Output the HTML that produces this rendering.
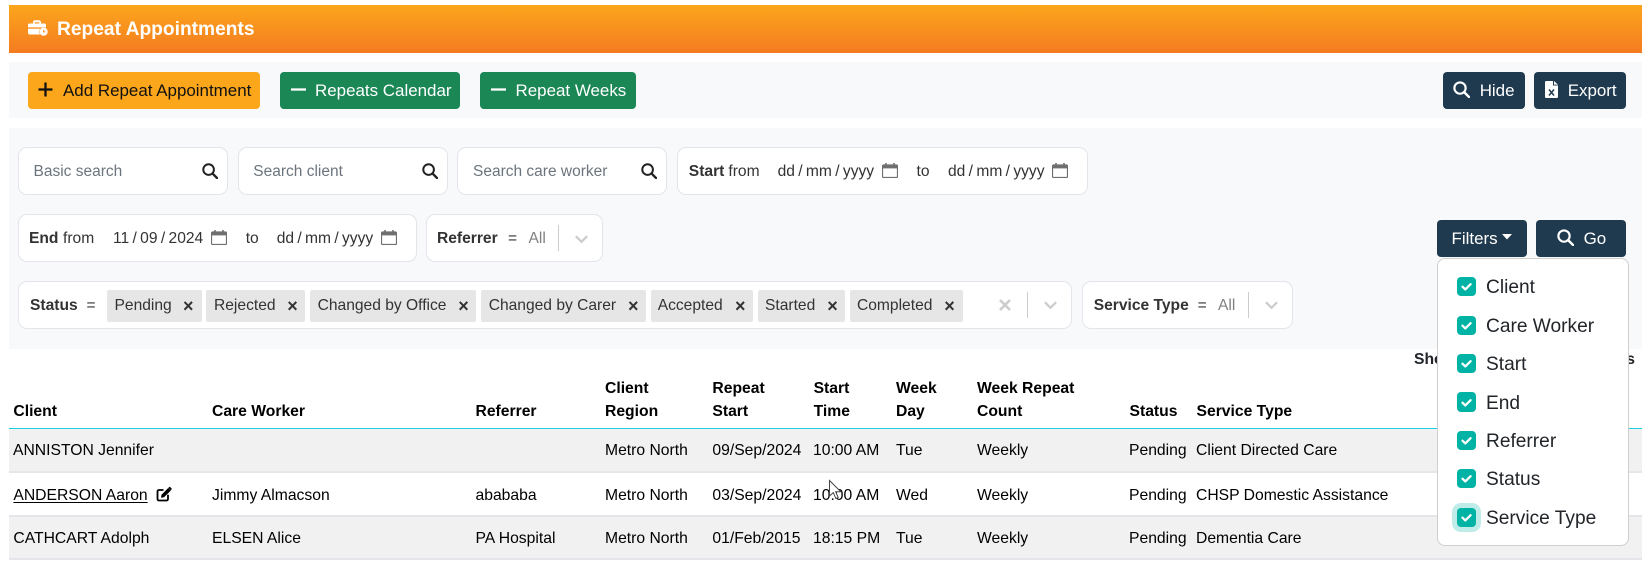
<!DOCTYPE html>
<html lang="en">
<head>
<meta charset="utf-8">
<title>Repeat Appointments</title>
<style>
html,body{margin:0;padding:0;background:#fff}
body{position:relative;width:1642px;height:570px;overflow:hidden;font-family:"Liberation Sans",Arial,sans-serif;color:#212529}
.a{position:absolute}
.t{position:absolute;white-space:nowrap;line-height:22px;height:22px}
.b{font-weight:bold}
.btn{position:absolute;border-radius:4px}
.box{position:absolute;background:#fff;border:1px solid #e3e5ea;border-radius:9px;box-sizing:border-box}
.f{font-size:15.6px;color:#333}
.d{word-spacing:-1px}
.ph{font-size:15.5px;color:#6c757d}
.w{font-size:16.95px;color:#fff}
.tag{position:absolute;background:#e6e6e6;top:290px;height:32px;border-radius:2px}
.x{font-size:18px;color:#333;font-weight:bold}
.sep{position:absolute;width:1px;background:#ccc}
.th{font-size:15.7px;font-weight:bold;color:#000}
.td{font-size:15.7px;color:#000}
.cb{position:absolute;left:1457px;width:19px;height:19px;background:#00b3a4;border-radius:4px}
.lb{position:absolute;left:1486px;font-size:19.15px;color:#212529;white-space:nowrap;line-height:24px;height:24px}
svg{position:absolute;overflow:visible}
</style>
</head>
<body>
<svg width="0" height="0" style="position:absolute">
  <defs>
    <symbol id="mag" viewBox="0 0 16 16"><circle cx="6.6" cy="6.6" r="5.3" fill="none" stroke="currentColor" stroke-width="2"/><path d="M10.6 10.6L15 15" stroke="currentColor" stroke-width="2.3" stroke-linecap="round"/></symbol>
    <symbol id="cal" viewBox="0 0 16 16"><path d="M1.5 3h13a1 1 0 0 1 1 1v10.5a1 1 0 0 1-1 1h-13a1 1 0 0 1-1-1V4a1 1 0 0 1 1-1z" fill="none" stroke="#6f6f6f" stroke-width="1.2"/><path d="M.8 3h14.4v3.4H.8z" fill="#6f6f6f"/><path d="M3.2 1h1.6v3H3.2zM11.2 1h1.6v3h-1.6z" fill="#6f6f6f"/></symbol>
    <symbol id="chev" viewBox="0 0 16 10"><path d="M2 2l6 6 6-6" fill="none" stroke="#ccc" stroke-width="2.4"/></symbol>
    <symbol id="chk" viewBox="0 0 19 19"><path d="M5.5 9.7l2.8 2.7 5.3-5.2" fill="none" stroke="#fff" stroke-width="2.3" stroke-linecap="round" stroke-linejoin="round"/></symbol>
  </defs>
</svg>

<!-- Header -->
<div class="a" style="left:9px;top:5px;width:1633px;height:48px;background:linear-gradient(#fca61c,#f47b20)"></div>
<svg style="left:28px;top:20px" width="20" height="16" viewBox="0 0 20 16">
  <path d="M5 4V2.2C5 1 6 .3 7 .3h4c1 0 2 .7 2 1.9V4h-1.7V2.2H6.700V4z" fill="#fff"/>
  <path d="M1.500 3.500h15c.8 0 1.500.7 1.500 1.500v2.400H0V5c0-.8.700-1.500 1.500-1.500z" fill="#fff"/>
  <path d="M0 8.800h12.200a5 5 0 0 0-.2 5.700H1.500C.7 14.500 0 13.800 0 13z" fill="#fff"/>
  <circle cx="15.600" cy="11.700" r="4.100" fill="#fff"/>
  <path d="M15.600 9.700v2.200h1.600" fill="none" stroke="#f68c1e" stroke-width="1"/>
</svg>
<span class="t b" style="left:57px;top:18.500px;font-size:19.2px;color:#fff">Repeat Appointments</span>

<!-- Toolbar -->
<div class="a" style="left:9px;top:62px;width:1633px;height:56px;background:#f8f9fa"></div>
<div class="btn" style="left:28px;top:72px;width:232px;height:37px;background:#fca61c"></div>
<svg style="left:38px;top:82px" width="15" height="15" viewBox="0 0 15 15"><path d="M7.500 0.500v14M.5 7.500h14" stroke="#111" stroke-width="2.300"/></svg>
<span class="t" style="left:63px;top:80px;font-size:16.95px;color:#111">Add Repeat Appointment</span>

<div class="btn" style="left:280px;top:72px;width:180px;height:37px;background:#1a8755"></div>
<svg style="left:291px;top:88px" width="15" height="3" viewBox="0 0 15 3"><path d="M0 1.500h15" stroke="#fff" stroke-width="2.300"/></svg>
<span class="t w" style="left:315px;top:80px">Repeats Calendar</span>

<div class="btn" style="left:480px;top:72px;width:156px;height:37px;background:#1a8755"></div>
<svg style="left:491px;top:88px" width="15" height="3" viewBox="0 0 15 3"><path d="M0 1.500h15" stroke="#fff" stroke-width="2.300"/></svg>
<span class="t w" style="left:515.500px;top:80px">Repeat Weeks</span>

<div class="btn" style="left:1443px;top:72px;width:82px;height:37px;background:#1f3a4e"></div>
<svg style="left:1453px;top:81px;color:#fff" width="17" height="17"><use href="#mag"/></svg>
<span class="t w" style="left:1479.700px;top:80px">Hide</span>

<div class="btn" style="left:1534px;top:72px;width:92px;height:37px;background:#1f3a4e"></div>
<svg style="left:1545px;top:81px" width="13" height="17" viewBox="0 0 13 17">
  <path d="M1.200 0H8v4.500h5v11.300c0 .7-.5 1.200-1.200 1.200H1.200C.5 17 0 16.500 0 15.800V1.200C0 .5.500 0 1.200 0z" fill="#fff"/>
  <path d="M9 0l4 3.600H9z" fill="#fff"/>
  <path d="M4 8.500l5 6M9 8.500l-5 6" stroke="#1f3a4e" stroke-width="1.500"/>
</svg>
<span class="t w" style="left:1567.700px;top:80px">Export</span>

<!-- Filter panel -->
<div class="a" style="left:9px;top:128px;width:1633px;height:221px;background:#f8f9fa"></div>

<div class="box" style="left:18px;top:147px;width:210px;height:48px"></div>
<span class="t ph" style="left:33.500px;top:161px">Basic search</span>
<svg style="left:202px;top:163px;color:#222" width="16" height="16"><use href="#mag"/></svg>

<div class="box" style="left:238px;top:147px;width:210px;height:48px"></div>
<span class="t ph" style="left:253.300px;top:161px">Search client</span>
<svg style="left:422px;top:163px;color:#222" width="16" height="16"><use href="#mag"/></svg>

<div class="box" style="left:457px;top:147px;width:210px;height:48px"></div>
<span class="t ph" style="left:473px;top:161px">Search care worker</span>
<svg style="left:641px;top:163px;color:#222" width="16" height="16"><use href="#mag"/></svg>

<div class="box" style="left:677px;top:147px;width:411px;height:48px"></div>
<span class="t f b" style="left:688.800px;top:161px">Start</span>
<span class="t f" style="left:728.400px;top:161px">from</span>
<span class="t f d" style="left:777.600px;top:161px">dd / mm / yyyy</span>
<svg style="left:882px;top:162px" width="16" height="16"><use href="#cal"/></svg>
<span class="t f" style="left:916.500px;top:161px">to</span>
<span class="t f d" style="left:948px;top:161px">dd / mm / yyyy</span>
<svg style="left:1052px;top:162px" width="16" height="16"><use href="#cal"/></svg>

<div class="box" style="left:18px;top:214px;width:399px;height:48px"></div>
<span class="t f b" style="left:29px;top:228px">End</span>
<span class="t f" style="left:63px;top:228px">from</span>
<span class="t f d" style="left:113px;top:228px">11 / 09 / 2024</span>
<svg style="left:211px;top:229px" width="16" height="16"><use href="#cal"/></svg>
<span class="t f" style="left:245.700px;top:228px">to</span>
<span class="t f d" style="left:276.700px;top:228px">dd / mm / yyyy</span>
<svg style="left:381px;top:229px" width="16" height="16"><use href="#cal"/></svg>

<div class="box" style="left:426px;top:214px;width:177px;height:48px"></div>
<span class="t f b" style="left:437px;top:228px">Referrer</span>
<span class="t f" style="left:508px;top:228px">=</span>
<span class="t f" style="left:528.500px;top:228px;color:#808080">All</span>
<div class="sep" style="left:558px;top:225px;height:26px"></div>
<svg style="left:574px;top:234px" width="15" height="10"><use href="#chev"/></svg>

<div class="box" style="left:18px;top:281px;width:1054px;height:48px"></div>
<span class="t f b" style="left:30px;top:295px">Status</span>
<span class="t f" style="left:86.500px;top:295px">=</span>

<div class="tag" style="left:107px;width:95px"></div>
<span class="t f" style="left:114.500px;top:295px">Pending</span>
<span class="t x" style="left:183px;top:295px">×</span>
<div class="tag" style="left:206px;width:99px"></div>
<span class="t f" style="left:214px;top:295px">Rejected</span>
<span class="t x" style="left:287.300px;top:295px">×</span>
<div class="tag" style="left:310px;width:166px"></div>
<span class="t f" style="left:317.600px;top:295px">Changed by Office</span>
<span class="t x" style="left:458.300px;top:295px">×</span>
<div class="tag" style="left:481px;width:165px"></div>
<span class="t f" style="left:488.700px;top:295px">Changed by Carer</span>
<span class="t x" style="left:628px;top:295px">×</span>
<div class="tag" style="left:651px;width:102px"></div>
<span class="t f" style="left:657.700px;top:295px">Accepted</span>
<span class="t x" style="left:735px;top:295px">×</span>
<div class="tag" style="left:758px;width:87px"></div>
<span class="t f" style="left:765px;top:295px">Started</span>
<span class="t x" style="left:827.300px;top:295px">×</span>
<div class="tag" style="left:850px;width:113px"></div>
<span class="t f" style="left:857px;top:295px">Completed</span>
<span class="t x" style="left:944.300px;top:295px">×</span>

<svg style="left:999px;top:299px" width="12" height="12" viewBox="0 0 12 12"><path d="M1 1l10 10M11 1L1 11" stroke="#ccc" stroke-width="2.600"/></svg>
<div class="sep" style="left:1027px;top:292px;height:26px"></div>
<svg style="left:1043px;top:300px" width="15" height="10"><use href="#chev"/></svg>

<div class="box" style="left:1082px;top:281px;width:211px;height:48px"></div>
<span class="t f b" style="left:1093.700px;top:295px">Service Type</span>
<span class="t f" style="left:1197.600px;top:295px">=</span>
<span class="t f" style="left:1218px;top:295px;color:#808080">All</span>
<div class="sep" style="left:1248px;top:292px;height:26px"></div>
<svg style="left:1264px;top:300px" width="15" height="10"><use href="#chev"/></svg>

<div class="btn" style="left:1437px;top:220px;width:90px;height:37px;background:#1f3a4e"></div>
<span class="t w" style="left:1451.500px;top:228px">Filters</span>
<svg style="left:1502px;top:234px" width="10" height="6" viewBox="0 0 10 6"><path d="M0 0h10L5 5.500z" fill="#fff"/></svg>

<div class="btn" style="left:1536px;top:220px;width:90px;height:37px;background:#1f3a4e"></div>
<svg style="left:1557px;top:229px;color:#fff" width="17" height="17"><use href="#mag"/></svg>
<span class="t w" style="left:1583.600px;top:228px">Go</span>

<!-- Table -->
<span class="t b" style="left:1414px;top:349px;font-size:15.7px;color:#212529">Showing</span>
<span class="t b" style="right:7px;top:349px;font-size:15.7px;color:#212529">Records</span>

<span class="t th" style="left:13.400px;top:401px">Client</span>
<span class="t th" style="left:212px;top:401px">Care Worker</span>
<span class="t th" style="left:475.500px;top:401px">Referrer</span>
<span class="t th" style="left:605px;top:378px">Client</span>
<span class="t th" style="left:605px;top:401px">Region</span>
<span class="t th" style="left:712.400px;top:378px">Repeat</span>
<span class="t th" style="left:712.400px;top:401px">Start</span>
<span class="t th" style="left:813.600px;top:378px">Start</span>
<span class="t th" style="left:813.600px;top:401px">Time</span>
<span class="t th" style="left:896px;top:378px">Week</span>
<span class="t th" style="left:896px;top:401px">Day</span>
<span class="t th" style="left:977px;top:378px">Week Repeat</span>
<span class="t th" style="left:977px;top:401px">Count</span>
<span class="t th" style="left:1129.500px;top:401px">Status</span>
<span class="t th" style="left:1196.500px;top:401px">Service Type</span>

<div class="a" style="left:9px;top:428px;width:1633px;height:1px;background:#19cfe8"></div>
<div class="a" style="left:9px;top:429px;width:1633px;height:42px;background:#f1f1f1"></div>
<div class="a" style="left:9px;top:471px;width:1633px;height:2px;background:#e4e6ea"></div>
<div class="a" style="left:9px;top:515px;width:1633px;height:2px;background:#e4e6ea"></div>
<div class="a" style="left:9px;top:517px;width:1633px;height:41px;background:#f1f1f1"></div>
<div class="a" style="left:9px;top:558px;width:1633px;height:2px;background:#e4e6ea"></div>

<span class="t td" style="left:13px;top:440px">ANNISTON Jennifer</span>
<span class="t td" style="left:605px;top:440px">Metro North</span>
<span class="t td" style="left:712.400px;top:440px">09/Sep/2024</span>
<span class="t td" style="left:813px;top:440px">10:00 AM</span>
<span class="t td" style="left:896px;top:440px">Tue</span>
<span class="t td" style="left:977px;top:440px">Weekly</span>
<span class="t td" style="left:1129px;top:440px">Pending</span>
<span class="t td" style="left:1196px;top:440px">Client Directed Care</span>

<span class="t td" style="left:13.400px;top:485px;text-decoration:underline;text-underline-offset:2px">ANDERSON Aaron</span>
<svg style="left:156px;top:486px" width="16" height="16" viewBox="0 0 16 16">
  <path d="M12 8.800V13a1.500 1.500 0 0 1-1.500 1.500H3A1.500 1.500 0 0 1 1.500 13V5.500A1.500 1.500 0 0 1 3 4h4.500" fill="none" stroke="#000" stroke-width="1.800"/>
  <path d="M5.500 8.800L12.200 2l2.600 2.600L8 11.300l-3 .5z" fill="#000"/>
  <path d="M13 1.200a1 1 0 0 1 1.400 0l1 1a1 1 0 0 1 0 1.400l-.7.700L12.300 1.900z" fill="#000"/>
</svg>
<span class="t td" style="left:212px;top:485px">Jimmy Almacson</span>
<span class="t td" style="left:475.500px;top:485px">abababa</span>
<span class="t td" style="left:605px;top:485px">Metro North</span>
<span class="t td" style="left:712.400px;top:485px">03/Sep/2024</span>
<span class="t td" style="left:813px;top:485px">10:00 AM</span>
<span class="t td" style="left:896px;top:485px">Wed</span>
<span class="t td" style="left:977px;top:485px">Weekly</span>
<span class="t td" style="left:1129px;top:485px">Pending</span>
<span class="t td" style="left:1196px;top:485px">CHSP Domestic Assistance</span>

<span class="t td" style="left:13.400px;top:528px">CATHCART Adolph</span>
<span class="t td" style="left:212px;top:528px">ELSEN Alice</span>
<span class="t td" style="left:475.500px;top:528px">PA Hospital</span>
<span class="t td" style="left:605px;top:528px">Metro North</span>
<span class="t td" style="left:712.400px;top:528px">01/Feb/2015</span>
<span class="t td" style="left:813px;top:528px">18:15 PM</span>
<span class="t td" style="left:896px;top:528px">Tue</span>
<span class="t td" style="left:977px;top:528px">Weekly</span>
<span class="t td" style="left:1129px;top:528px">Pending</span>
<span class="t td" style="left:1196px;top:528px">Dementia Care</span>

<!-- Mouse cursor -->
<svg style="left:829px;top:480px" width="14" height="20" viewBox="0 0 14 20"><path d="M.5.500v15.500l3.800-3.400 2.500 5.800 2.400-1-2.500-5.600h5.100z" fill="#fff" stroke="#444" stroke-width="1"/></svg>

<!-- Dropdown -->
<div class="a" style="left:1437px;top:257.500px;width:191.500px;height:288.500px;box-sizing:border-box;background:#fff;border:1px solid #cfcfcf;border-radius:8px"></div>

<div class="cb" style="top:277px"></div><svg style="left:1457px;top:277px" width="19" height="19"><use href="#chk"/></svg>
<span class="lb" style="top:276px">Client</span>
<div class="cb" style="top:316px"></div><svg style="left:1457px;top:316px" width="19" height="19"><use href="#chk"/></svg>
<span class="lb" style="top:315px">Care Worker</span>
<div class="cb" style="top:354px"></div><svg style="left:1457px;top:354px" width="19" height="19"><use href="#chk"/></svg>
<span class="lb" style="top:353px">Start</span>
<div class="cb" style="top:392px;height:20px"></div><svg style="left:1457px;top:393px" width="19" height="19"><use href="#chk"/></svg>
<span class="lb" style="top:392px">End</span>
<div class="cb" style="top:431px"></div><svg style="left:1457px;top:431px" width="19" height="19"><use href="#chk"/></svg>
<span class="lb" style="top:430px">Referrer</span>
<div class="cb" style="top:469px"></div><svg style="left:1457px;top:469px" width="19" height="19"><use href="#chk"/></svg>
<span class="lb" style="top:468px">Status</span>
<div class="cb" style="top:508px;box-shadow:0 0 0 5px #bfebe8"></div><svg style="left:1457px;top:508px" width="19" height="19"><use href="#chk"/></svg>
<span class="lb" style="top:507px">Service Type</span>
</body>
</html>
